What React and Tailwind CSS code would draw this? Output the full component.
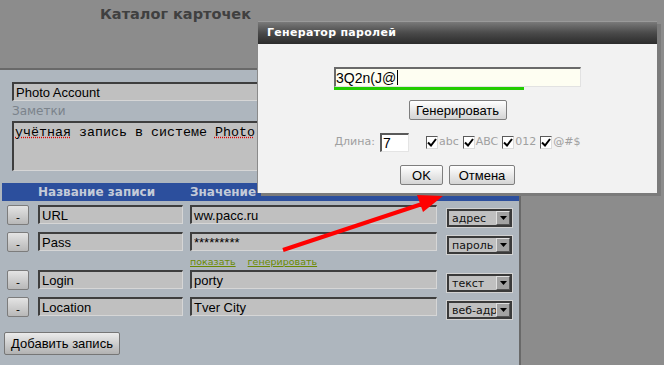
import React from 'react';

const inset =
  'border-t-2 border-l-2 border-b border-r border-t-[#3e3e3e] border-l-[#3e3e3e] border-b-[#d6d6d6] border-r-[#d6d6d6]';

function Field({ value, className = '' }) {
  return (
    <div
      className={`${inset} bg-[#c0c0c0] h-[19px] pl-[2px] flex items-center text-[13px] text-black font-['Liberation_Sans',sans-serif] leading-none overflow-hidden whitespace-nowrap ${className}`}
    >
      {value}
    </div>
  );
}

function Select({ value }) {
  return (
    <div className="mt-[4px] ml-[10px] w-[65px] h-[18px] shrink-0 border-2 border-[#3a3a3a] shadow-[0_0_0_1px_#d2d2d2] bg-[#c0c0c0] flex items-center">
      <span className="flex-1 pl-[3px] text-[11px] text-[#111] font-['DejaVu_Sans',sans-serif] overflow-hidden whitespace-nowrap leading-none">
        {value}
      </span>
      <span className="w-[14px] h-[14px] bg-[#a2a2a2] border border-t-[#e0e0e0] border-l-[#e0e0e0] border-b-[#555] border-r-[#555] flex items-center justify-center">
        <svg width="7" height="4" viewBox="0 0 7 4">
          <path d="M0 0 H7 L3.5 4 Z" fill="#000" />
        </svg>
      </span>
    </div>
  );
}

function Row({ name, value, type, className = '' }) {
  return (
    <div className={`flex items-start h-[19px] ml-[7px] ${className}`}>
      <button className="w-[22px] h-[20px] shrink-0 rounded-[2px] border border-[#7c7c7c] bg-gradient-to-b from-[#e4e4e4] to-[#b8b8b8] text-[11px] leading-none pt-[4px] font-['DejaVu_Sans',sans-serif]">
        -
      </button>
      <Field value={name} className="ml-[9px] w-[145px] shrink-0" />
      <Field value={value} className="ml-[7px] w-[247px] shrink-0" />
      <Select value={type} />
    </div>
  );
}

function Check({ label }) {
  return (
    <span className="flex items-center ml-[4px]">
      <span className="w-[12px] h-[13px] bg-white border border-t-[#5a5a5a] border-l-[#5a5a5a] border-b-[#dcdcdc] border-r-[#dcdcdc] flex items-center justify-center">
        <svg width="10" height="9" viewBox="0 0 10 9">
          <path d="M1 4.5 L4 7.5 L9 1" stroke="#000" strokeWidth="2" fill="none" />
        </svg>
      </span>
      <span className="ml-[1px] text-[11px] text-[#a0a0a0]">{label}</span>
    </span>
  );
}

function Btn({ children, className = '' }) {
  return (
    <button
      className={`h-[20px] rounded-[2px] border border-[#7e7e7e] bg-gradient-to-b from-[#ffffff] to-[#d4d4d4] text-[13px] text-black font-['Liberation_Sans',sans-serif] leading-none ${className}`}
    >
      {children}
    </button>
  );
}

function Generator() {
  return (
    <div className="absolute left-[257px] top-[21px] w-[400px] h-[172px] bg-[#f2f2f2] shadow-[4px_3px_0_0_#7b7b7b] border-l border-[#8a8a8a] font-['DejaVu_Sans',sans-serif]">
      <div className="h-[23px] bg-gradient-to-b from-[#7a7a7a] via-[#4a4a4a] to-[#2c2c2c] border-t border-[#9a9a9a] flex items-center pl-[9px]">
        <span className="text-white text-[11px] font-bold tracking-[0.3px]">Генератор паролей</span>
      </div>
      <div className="flex flex-col items-center">
        <div className="mt-[23px] w-[247px]">
          <div className="h-[20px] bg-[#fefef2] border-t-2 border-l-2 border-b border-r border-t-[#6a6a6a] border-l-[#6a6a6a] border-b-[#e2e2e2] border-r-[#e2e2e2] flex items-center text-[14px] font-['Liberation_Sans',sans-serif] leading-none">
            <span>3Q2n(J@</span>
            <span className="w-px h-[15px] bg-black ml-px" />
          </div>
          <div className="h-[3px] w-[190px] bg-[#22cc00]" />
        </div>
        <Btn className="mt-[10px] w-[98px] h-[19px]">Генерировать</Btn>
        <div className="mt-[13px] flex items-center h-[19px]">
          <span className="text-[11px] text-[#a0a0a0] mr-[5px]">Длина:</span>
          <div className="w-[29px] h-[19px] bg-white border-t-2 border-l-2 border-b border-r border-t-[#5a5a5a] border-l-[#5a5a5a] border-b-[#e4e4e4] border-r-[#e4e4e4] flex items-center pl-[1px] text-[14px] font-['Liberation_Sans',sans-serif] leading-none">
            7
          </div>
          <span className="w-[13px]" />
          <Check label="abc" />
          <Check label="ABC" />
          <Check label="012" />
          <Check label="@#$" />
        </div>
        <div className="mt-[13px] flex">
          <Btn className="w-[43px]">OK</Btn>
          <Btn className="ml-[6px] w-[66px]">Отмена</Btn>
        </div>
      </div>
    </div>
  );
}

export default function App() {
  return (
    <div className="relative w-[664px] h-[365px] overflow-hidden bg-[#8c8c8c] font-['DejaVu_Sans',sans-serif]">
      <div className="h-[68px] pl-[100px] pt-[4px]">
        <h1 className="text-[14.5px] font-bold text-[#404040]">Каталог карточек</h1>
      </div>

      <div className="w-[521px] h-[297px] bg-[#aeb6be] border-t-2 border-r-2 border-[#696969]">
        <div className="pt-[12px] pl-[12px]">
          <Field value="Photo Account" className="w-[500px]" />
          <div className="h-[20px] leading-[20px] text-[12px] text-[#7b838b]">Заметки</div>
          <div className={`${inset} bg-[#c0c0c0] w-[500px] h-[50px] pl-[1px] pt-[2px] text-[13.33px] leading-[15px] font-['Liberation_Mono',monospace] text-black whitespace-nowrap overflow-hidden`}>
            <span className="underline decoration-dotted decoration-[#e00000]">учётная</span> запись в системе{' '}
            <span className="underline decoration-dotted decoration-[#e00000]">Photo</span> Account
          </div>
        </div>

        <div className="mt-[12px] ml-[2px] w-[517px] h-[18px] bg-[#2c4f9d] flex items-center pl-[36px] text-[12px] font-bold text-[#c4cbd8]">
          <span className="w-[152px]">Название записи</span>
          <span className="w-[258px]">Значение</span>
          <span>Тип</span>
        </div>

        <div className="mt-[4px] flex flex-col">
          <Row name="URL" value="ww.pacc.ru" type="адрес" />
          <Row name="Pass" value="*********" type="пароль" className="mt-[8px]" />
          <div className="h-[19px] pl-[190px] pt-[6px] text-[9.5px] text-[#6b8a00] leading-none">
            <span className="underline">показать</span>
            <span className="underline ml-[12px]">генерировать</span>
          </div>
          <Row name="Login" value="porty" type="текст" />
          <Row name="Location" value="Tver City" type="веб-адрес" className="mt-[8px]" />
        </div>

        <div className="mt-[15px] ml-[4px]">
          <button className="w-[116px] h-[23px] rounded-[2px] border border-[#767676] bg-gradient-to-b from-[#ebebeb] to-[#b2b2b2] text-[13px] font-['Liberation_Sans',sans-serif] text-black">
            Добавить запись
          </button>
        </div>
      </div>

      <Generator />

      <svg className="absolute left-0 top-0 pointer-events-none" width="664" height="365">
        <line x1="283" y1="250" x2="425" y2="203" stroke="#ff0000" strokeWidth="4" />
        <polygon points="443,196 417,195 423,212" fill="#ff0000" />
      </svg>
    </div>
  );
}
